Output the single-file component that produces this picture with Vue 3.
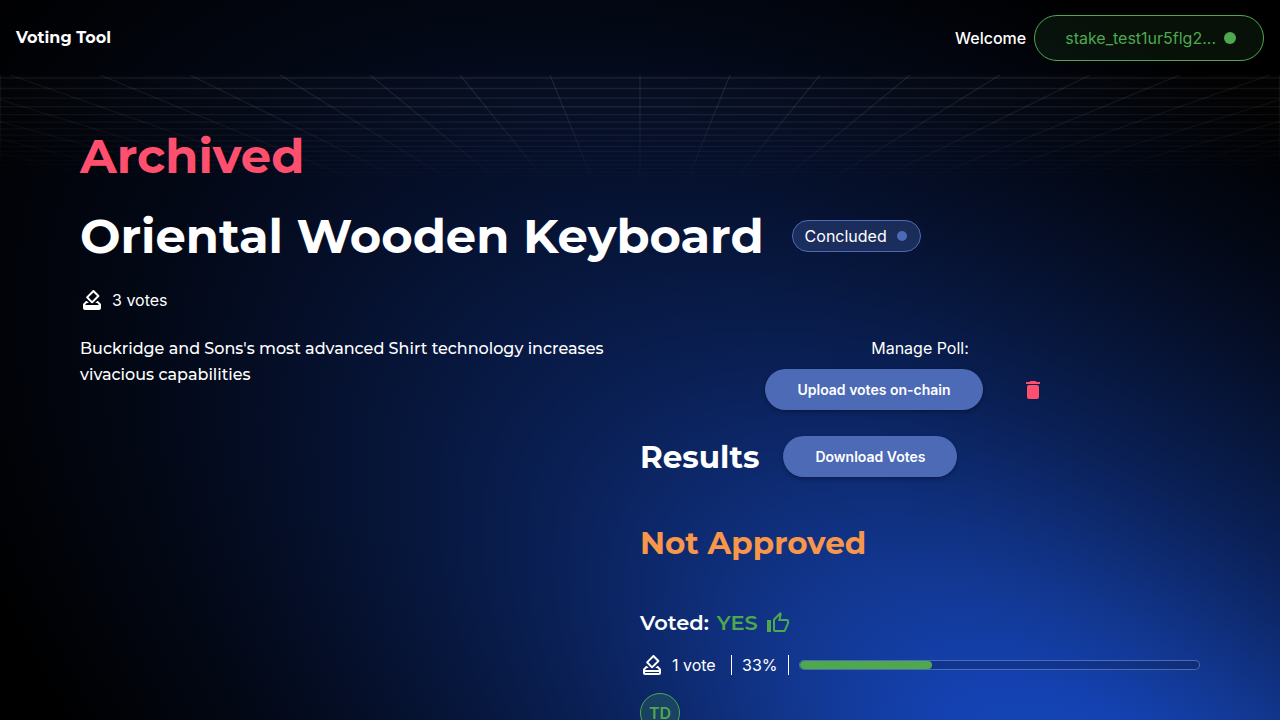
<script setup>
const icons = {
  ballot:
    'M18 13h-.68l-2 2h1.91L19 17H5l1.78-2h2.05l-2-2H6l-3 3v4c0 1.1.89 2 1.99 2H19c1.1 0 2-.89 2-2v-4l-3-3zm-1-5.05-4.95 4.95-3.54-3.54 4.95-4.95L17 7.95zm-4.24-5.66L6.39 8.66c-.39.39-.39 1.02 0 1.41l4.95 4.95c.39.39 1.02.39 1.41 0l6.36-6.36c.39-.39.39-1.02 0-1.41L14.16 2.3c-.38-.4-1.01-.4-1.4-.01z',
  ballotOutlined:
    'M18 13h-.68l-2 2h1.91L19 17H5l1.78-2h2.05l-2-2H6l-3 3v4c0 1.1.89 2 1.99 2H19c1.1 0 2-.89 2-2v-4l-3-3zm1 7H5v-1h14v1zm-7.66-4.98c.39.39 1.02.39 1.41 0l6.36-6.36c.39-.39.39-1.02 0-1.41L14.16 2.3c-.38-.4-1.01-.4-1.4-.01L6.39 8.66c-.39.39-.39 1.02 0 1.41l4.95 4.95zm2.12-10.61L17 7.95l-4.95 4.95-3.54-3.54 4.95-4.95z',
  thumbUp:
    'M9 21h9c.83 0 1.54-.5 1.84-1.22l3.02-7.05c.09-.23.14-.47.14-.73v-2c0-1.1-.9-2-2-2h-6.31l.95-4.57.03-.32c0-.41-.17-.79-.44-1.06L14.17 1 7.58 7.59C7.22 7.95 7 8.45 7 9v10c0 1.1.9 2 2 2zM9 9l4.34-4.34L12 10h9v2l-3 7H9V9zM1 9h4v12H1z',
  trash:
    'M6 19c0 1.1.9 2 2 2h8c1.1 0 2-.9 2-2V9c0-1.1-.9-2-2-2H8c-1.1 0-2 .9-2 2v10zM18 4h-2.5l-.71-.71c-.18-.18-.44-.29-.7-.29H9.91c-.26 0-.52.11-.7.29L8.5 4H5v2h14V4z',
}

// Perspective grid: lines run towards a vanishing point below the visible strip.
const vanish = { x: 640, y: 222 }
const rays = Array.from({ length: 41 }, (_, i) => ({ x: vanish.x + (i - 20) * 90 }))
const rows = Array.from({ length: 22 }, (_, k) => vanish.y - 1 / (0.004566 + 0.00023 * k))

const share = 33
</script>

<template>
  <div class="page">
    <svg class="glow" viewBox="0 0 1280 720" preserveAspectRatio="none" aria-hidden="true">
      <defs>
        <radialGradient
          id="glow"
          gradientUnits="userSpaceOnUse"
          cx="0"
          cy="0"
          r="1"
          gradientTransform="translate(1110 830) rotate(36) scale(1400 700)"
        >
          <stop offset="0" stop-color="#1648bc" />
          <stop offset="0.14" stop-color="#1442b2" />
          <stop offset="0.26" stop-color="#123790" />
          <stop offset="0.36" stop-color="#0e2b72" />
          <stop offset="0.46" stop-color="#0a2056" />
          <stop offset="0.57" stop-color="#07173e" />
          <stop offset="0.68" stop-color="#050f29" />
          <stop offset="0.8" stop-color="#030816" />
          <stop offset="0.92" stop-color="#010308" />
          <stop offset="1" stop-color="#000000" />
        </radialGradient>
      </defs>
      <rect width="1280" height="720" fill="#000" />
      <rect width="1280" height="720" fill="url(#glow)" />
    </svg>

    <header class="topbar">
      <a class="brand" href="#">Voting Tool</a>
      <div class="account">
        <span class="welcome">Welcome</span>
        <button class="wallet" type="button">
          <span>stake_test1ur5flg2...</span>
          <i class="dot"></i>
        </button>
      </div>
    </header>

    <div class="body">
      <svg class="grid" viewBox="0 0 1280 113" preserveAspectRatio="none" aria-hidden="true">
        <g stroke="#fff" stroke-opacity="0.08" stroke-width="1.3">
          <line v-for="ray in rays" :key="ray.x" :x1="ray.x" y1="0" :x2="vanish.x" :y2="vanish.y" />
          <line v-for="y in rows" :key="y" x1="0" :y1="y" x2="1280" :y2="y" />
          <line x1="0.5" y1="0" x2="0.5" y2="113" />
          <line x1="1279.5" y1="0" x2="1279.5" y2="113" />
        </g>
      </svg>

      <main class="content">
        <h1 class="title archived">Archived</h1>
        <div class="title-row">
          <h1 class="title">Oriental Wooden Keyboard</h1>
          <span class="chip">Concluded <i class="chip-dot"></i></span>
        </div>
        <div class="votes">
          <svg class="icon" viewBox="0 0 24 24"><path :d="icons.ballot" /></svg>
          <span>3 votes</span>
        </div>

        <div class="columns">
          <p class="description">
            Buckridge and Sons's most advanced Shirt technology increases vivacious capabilities
          </p>
          <div class="side">
            <section class="manage">
              <span class="manage-label">Manage Poll:</span>
              <div class="manage-actions">
                <button class="btn" type="button">Upload votes on-chain</button>
                <button class="icon-btn" type="button" aria-label="Delete poll">
                  <svg class="icon" viewBox="0 0 24 24"><path :d="icons.trash" /></svg>
                </button>
              </div>
            </section>

            <div class="results-head">
              <h2 class="heading">Results</h2>
              <button class="btn" type="button">Download Votes</button>
            </div>
            <h2 class="heading outcome">Not Approved</h2>

            <h3 class="voted">
              Voted: <span class="yes">YES</span>
              <svg class="icon yes" viewBox="0 0 24 24"><path :d="icons.thumbUp" /></svg>
            </h3>
            <div class="tally">
              <svg class="icon" viewBox="0 0 24 24"><path :d="icons.ballotOutlined" /></svg>
              <span class="count">1 vote</span>
              <i class="rule"></i>
              <span class="percent">{{ share }}%</span>
              <i class="rule"></i>
              <div class="bar" role="progressbar" :aria-valuenow="share" aria-label="Yes votes">
                <div class="fill" :style="{ width: share + '%' }"></div>
              </div>
            </div>
            <div class="avatar">TD</div>
          </div>
        </div>
      </main>
    </div>
  </div>
</template>

<style>
body {
  background: #000;
}
</style>

<style scoped>
.page {
  position: relative;
  height: 100vh;
  overflow: hidden;
  color: #fff;
  font: 400 16px/24px Inter, "Liberation Sans", sans-serif;
}
.glow {
  position: absolute;
  inset: 0;
  width: 100%;
  height: 100%;
}
.topbar {
  position: relative;
  display: flex;
  align-items: center;
  justify-content: space-between;
  padding: 15px 16px 14px;
}
.brand {
  color: #fff;
  text-decoration: none;
  font-family: Montserrat, Inter, sans-serif;
  font-weight: 700;
}
.account {
  display: flex;
  align-items: center;
  gap: 8px;
}
.welcome {
  font-weight: 500;
}
.wallet {
  display: flex;
  align-items: center;
  gap: 8px;
  height: 46px;
  padding: 0 27px 0 30px;
  border: 1px solid #4ea84e;
  border-radius: 23px;
  background: rgba(78, 168, 78, 0.1);
  color: #4ea84e;
  font: inherit;
}
.dot {
  width: 12px;
  height: 12px;
  border-radius: 50%;
  background: #4ea84e;
}
.body {
  position: relative;
}
.grid {
  position: absolute;
  top: 0;
  left: 0;
  width: 100%;
  height: 113px;
  background: rgba(255, 255, 255, 0.015);
  mask-image: radial-gradient(ellipse 100% 113px at 50% 0, #000 30%, transparent 100%);
}
.content {
  position: relative;
  padding: 51px 80px 0;
}
.title {
  margin: 0;
  font: 700 48px/60px Montserrat, Inter, sans-serif;
}
.archived {
  color: #ff4f6e;
}
.title-row {
  display: flex;
  align-items: center;
  gap: 28px;
  margin-top: 20px;
}
.chip {
  display: flex;
  align-items: center;
  gap: 10px;
  box-sizing: border-box;
  height: 32px;
  padding: 0 13px 0 12px;
  border: 1px solid #4c6ab5;
  border-radius: 16px;
  background: rgba(76, 106, 181, 0.3);
}
.chip-dot {
  width: 10px;
  height: 10px;
  border-radius: 50%;
  background: #4c6ab5;
}
.icon {
  flex: none;
  width: 24px;
  height: 24px;
  fill: currentColor;
}
.votes {
  display: flex;
  align-items: center;
  gap: 8px;
  margin-top: 22px;
}
.columns {
  display: grid;
  grid-template-columns: 1fr 1fr;
  margin-top: 24px;
}
.description {
  margin: 0;
  font: 500 16px/26px Montserrat, Inter, sans-serif;
}
.manage {
  display: flex;
  flex-direction: column;
  align-items: center;
}
.manage-actions {
  display: flex;
  align-items: center;
  gap: 8px;
  margin-top: 9px;
}
.btn {
  height: 41px;
  padding: 0 32px;
  border: 0;
  border-radius: 21px;
  background: #4c6ab5;
  box-shadow: 0 2px 4px rgba(0, 0, 0, 0.3);
  color: #fff;
  font: 600 14px/24px Inter, sans-serif;
}
.icon-btn {
  display: flex;
  padding: 8px 30px;
  border: 0;
  background: none;
  color: #ff4f6e;
}
.results-head {
  display: flex;
  align-items: center;
  gap: 24px;
  margin-top: 26px;
}
.heading {
  margin: 0;
  font: 700 31px/40px Montserrat, Inter, sans-serif;
}
.outcome {
  margin-top: 46px;
  color: #f8964a;
}
.voted {
  display: flex;
  align-items: center;
  gap: 8px;
  margin: 46px 0 0;
  font: 600 21px/28px Montserrat, Inter, sans-serif;
}
.yes {
  color: #4ea84e;
}
.tally {
  display: flex;
  align-items: center;
  gap: 10px;
  margin-top: 16px;
}
.tally .icon {
  margin-right: -2px;
}
.count {
  min-width: 49px;
}
.percent {
  min-width: 36px;
}
.rule {
  width: 1px;
  height: 20px;
  background: #fff;
}
.bar {
  flex: 1;
  box-sizing: border-box;
  height: 10px;
  border: 1px solid rgba(120, 145, 205, 0.6);
  border-radius: 5px;
  background: rgba(0, 0, 0, 0.15);
  overflow: hidden;
}
.fill {
  height: 100%;
  border-radius: 5px;
  background: #4ea84e;
}
.avatar {
  display: flex;
  align-items: center;
  justify-content: center;
  box-sizing: border-box;
  width: 40px;
  height: 40px;
  margin-top: 16px;
  border: 1px solid #4ea84e;
  border-radius: 50%;
  background: rgba(78, 168, 78, 0.2);
  color: #4ea84e;
  font-weight: 600;
}
</style>
